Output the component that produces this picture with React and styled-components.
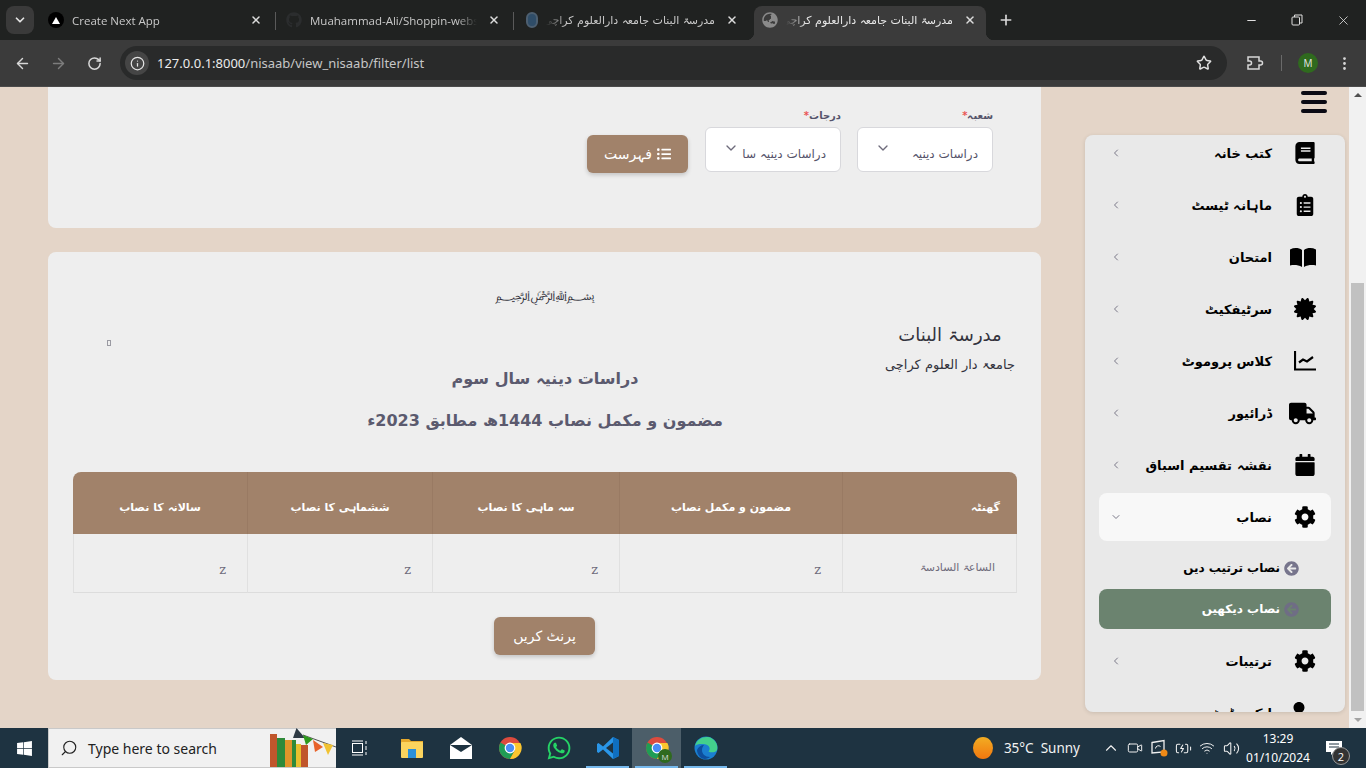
import React from 'react';
import styled, { createGlobalStyle } from 'styled-components';
import {
  ArrowLeft, ArrowRight, RotateCw, Info, Star, EllipsisVertical, X, Plus, Minus,
  ChevronDown, ChevronLeft, Search, ChevronUp, Volume2, Wifi, BatteryCharging, Video,
} from 'lucide-react';
import {
  FaBook, FaClipboardList, FaCertificate, FaTruck, FaCalendar, FaCog,
  FaUser, FaListUl, FaArrowCircleLeft, FaWindows, FaWhatsapp, FaGithub, FaGlobeAsia,
} from 'react-icons/fa';

const URDU = '"DejaVu Sans", sans-serif';
const UI = '"Open Sans", "DejaVu Sans", sans-serif';
const BROWN = '#a1826a';

const GlobalStyle = createGlobalStyle`
  html, body { margin: 0; padding: 0; height: 100%; overflow: hidden; }
  * { box-sizing: border-box; }
`;

const Screen = styled.div`
  width: 1366px;
  height: 768px;
  display: flex;
  flex-direction: column;
  font-family: ${UI};
  overflow: hidden;
`;

/* ---------- browser tabs ---------- */
const TabStrip = styled.div`
  height: 40px;
  flex: none;
  display: flex;
  align-items: flex-end;
  padding-left: 6px;
  background: #202221;
`;

const TabSearch = styled.div`
  width: 28px;
  height: 28px;
  margin: 0 4px 6px 0;
  border-radius: 8px;
  background: #3a3a3a;
  color: #e3e3e3;
  display: flex;
  align-items: center;
  justify-content: center;
`;

const Tab = styled.div`
  position: relative;
  width: ${(p) => (p.$active ? 232 : 238)}px;
  height: 34px;
  margin: ${(p) => (p.$active ? '0 2px' : '0')};
  padding: ${(p) => (p.$active ? '0 10px 6px 8px' : '0 14px 6px 10px')};
  display: flex;
  align-items: center;
  color: ${(p) => (p.$active ? '#e8e8e8' : '#c9c9c9')};
  background: ${(p) => (p.$active ? '#3b3b3b' : 'transparent')};
  border-radius: 8px 8px 0 0;
  font-size: 12px;
  ${(p) => !p.$active && !p.$last && `
    &::after {
      content: '';
      position: absolute;
      right: 0;
      top: 6px;
      width: 1px;
      height: 18px;
      background: #5a5a5a;
    }
  `}
  ${(p) => p.$active && `
    &::before, &::after {
      content: '';
      position: absolute;
      bottom: 0;
      width: 8px;
      height: 8px;
    }
    &::before {
      left: -8px;
      background: radial-gradient(circle at 0 0, transparent 8px, #3b3b3b 8.5px);
    }
    &::after {
      right: -8px;
      background: radial-gradient(circle at 100% 0, transparent 8px, #3b3b3b 8.5px);
    }
  `}
`;

const TabTitle = styled.span`
  flex: 1;
  min-width: 0;
  margin-left: 8px;
  white-space: nowrap;
  overflow: hidden;
  direction: ${(p) => (p.$rtl ? 'rtl' : 'ltr')};
  font-family: ${(p) => (p.$rtl ? URDU : UI)};
  font-size: ${(p) => (p.$rtl ? 11 : 11.5)}px;
  -webkit-mask-image: linear-gradient(${(p) => (p.$rtl ? 'to left' : 'to right')}, #000 88%, transparent);
  mask-image: linear-gradient(${(p) => (p.$rtl ? 'to left' : 'to right')}, #000 88%, transparent);
`;

const TabClose = styled(X)`
  flex: none;
  margin-left: 11px;
  color: #dcdcdc;
`;

const NextIcon = styled.span`
  width: 16px;
  height: 16px;
  flex: none;
  border-radius: 50%;
  background: #000;
  display: flex;
  align-items: center;
  justify-content: center;
  &::before {
    content: '';
    border-left: 4px solid transparent;
    border-right: 4px solid transparent;
    border-bottom: 7px solid #fff;
  }
`;

const SchoolIcon = styled.span`
  width: 12px;
  height: 16px;
  flex: none;
  margin-left: 2px;
  border-radius: 6px;
  background: #2f4d68;
  border: 2px solid #4d5f70;
`;

const NewTab = styled(Plus)`
  color: #d8d8d8;
  margin: 0 0 12px 10px;
`;

const WindowButtons = styled.div`
  margin-left: auto;
  align-self: stretch;
  display: flex;
`;

const WindowButton = styled.div`
  width: 46px;
  color: #e0e0e0;
  display: flex;
  align-items: center;
  justify-content: center;
`;

const RestoreIcon = () => (
  <svg width="12" height="12" viewBox="0 0 12 12" fill="none" stroke="currentColor">
    <rect x="1" y="3" width="7.5" height="8" rx="1" />
    <path d="M3.5 3V1h7.5v8H8.5" />
  </svg>
);

/* ---------- browser toolbar ---------- */
const Toolbar = styled.div`
  height: 46px;
  flex: none;
  position: relative;
  z-index: 1;
  display: flex;
  align-items: center;
  padding: 0 4px;
  background: #3b3b3b;
  box-shadow: 0 1px 0 #4b4b4b;
`;

const NavButton = styled.div`
  width: 36px;
  height: 36px;
  flex: none;
  display: flex;
  align-items: center;
  justify-content: center;
  color: ${(p) => (p.$dim ? '#7d7d7d' : '#d8d8d8')};
`;

const ExtensionButton = styled(NavButton)`
  margin-left: 10px;
`;

const Omnibox = styled.div`
  flex: 1;
  height: 34px;
  margin-left: 8px;
  padding: 0 15px 0 5px;
  border-radius: 17px;
  background: #292a2a;
  display: flex;
  align-items: center;
`;

const InfoBubble = styled.div`
  width: 24px;
  height: 24px;
  border-radius: 50%;
  background: #454545;
  color: #e4e4e4;
  display: flex;
  align-items: center;
  justify-content: center;
`;

const Url = styled.div`
  margin-left: 8px;
  flex: 1;
  font-family: "Noto Sans", sans-serif;
  font-size: 13px;
  color: #c6c6c6;
  span { color: #ececec; }
`;

const ToolbarSep = styled.div`
  width: 1px;
  height: 16px;
  margin: 0 8px;
  background: #6a6a6a;
`;

const Avatar = styled.div`
  width: 20px;
  height: 20px;
  border-radius: 50%;
  background: #2f6a1e;
  color: #e8e8e8;
  font-size: 10px;
  display: flex;
  align-items: center;
  justify-content: center;
`;

const ExtensionIcon = () => (
  <svg width="18" height="18" viewBox="0 0 18 18" fill="none" stroke="currentColor" strokeWidth="1.5">
    <path d="M2 3h11v4h1.500a2 2 0 0 1 0 4H13v4H2v-4h1.500a2 2 0 0 0 0-4H2z" />
  </svg>
);

/* ---------- page ---------- */
const Viewport = styled.div`
  flex: 1;
  min-height: 0;
  display: flex;
  background: #e4d5c8;
`;

const MainColumn = styled.div`
  width: 1041px;
  flex: none;
  padding-left: 48px;
  display: flex;
  flex-direction: column;
  gap: 24px;
`;

const FilterCard = styled.section`
  height: 142px;
  flex: none;
  padding: 20px 48px 0;
  background: #eeeeee;
  border-radius: 0 0 8px 8px;
  display: flex;
  direction: rtl;
  align-items: flex-start;
  gap: 16px;
`;

const Field = styled.div`
  width: 136px;
  display: flex;
  flex-direction: column;
`;

const FieldLabel = styled.label`
  height: 21px;
  font-family: ${URDU};
  font-size: 10px;
  font-weight: 700;
  color: #55536a;
  line-height: 20px;
  span { color: #ea5455; }
`;

const Select = styled.div`
  height: 45px;
  padding: 0 14px 0 17px;
  background: #fff;
  border: 1px solid #d8d8dc;
  border-radius: 6px;
  display: flex;
  align-items: center;
  justify-content: space-between;
  overflow: hidden;
  svg { flex: none; margin-bottom: 4px; }
`;

const SelectValue = styled.span`
  min-width: 0;
  margin-top: 8px;
  font-family: ${URDU};
  font-size: 12px;
  color: #55536a;
  white-space: nowrap;
`;

const BrownButton = styled.button`
  height: 38px;
  width: 101px;
  border: none;
  border-radius: 6px;
  background: ${BROWN};
  color: #fff;
  font-family: ${URDU};
  font-size: 14px;
  box-shadow: 0 2px 4px rgba(0, 0, 0, 0.18);
  display: flex;
  align-items: center;
  justify-content: center;
  gap: 5px;
  direction: rtl;
`;

const ListButton = styled(BrownButton)`
  margin: 29px 1px 0 0;
`;

const ReportCard = styled.section`
  height: 428px;
  flex: none;
  padding: 24px 24px 0 25px;
  background: #eeeeee;
  border-radius: 8px;
  display: flex;
  flex-direction: column;
  align-items: center;
`;

const Bismillah = styled.div`
  height: 40px;
  font-family: ${URDU};
  font-size: 13px;
  color: #33333d;
  direction: rtl;
  line-height: 40px;
  white-space: nowrap;
`;

const Letterhead = styled.div`
  align-self: stretch;
  height: 38px;
  margin-top: 4px;
  display: flex;
  justify-content: space-between;
  align-items: flex-start;
`;

const BrokenImage = styled.span`
  width: 4px;
  height: 6px;
  margin: 20px 0 0 34px;
  border: 1px solid #9a9aa2;
`;

const SchoolName = styled.div`
  width: 134px;
  direction: rtl;
  text-align: center;
  font-family: ${URDU};
  color: #33333d;
  white-space: nowrap;
`;

const SchoolLine = styled.div`
  height: 30px;
  line-height: 30px;
  font-size: ${(p) => p.$size}px;
`;

const Heading = styled.h2`
  margin: 0;
  direction: rtl;
  text-align: center;
  font-family: ${URDU};
  font-size: 16px;
  font-weight: 700;
  line-height: 42px;
  color: #5b5a6e;
`;

const Headings = styled.div`
  height: 114px;
`;

const Table = styled.table`
  width: 944px;
  flex: none;
  table-layout: fixed;
  border-collapse: separate;
  border-spacing: 0;
  direction: rtl;
`;

const Th = styled.th`
  height: 62px;
  padding: 8px 17px 0;
  background: ${BROWN};
  color: #fff;
  font-family: ${URDU};
  font-size: 11px;
  font-weight: 700;
  text-align: ${(p) => (p.$start ? 'right' : 'center')};
  border-left: 1px solid #997a63;
  &:first-child { border-top-right-radius: 8px; }
  &:last-child { border-top-left-radius: 8px; border-left: none; }
`;

const Td = styled.td`
  height: 59px;
  padding: ${(p) => (p.$urdu ? '8px' : '13px')} 21px 0;
  border-left: 1px solid #e0e0e0;
  border-bottom: 1px solid #dcdcdc;
  font-family: ${(p) => (p.$urdu ? URDU : '"DejaVu Serif", serif')};
  font-size: ${(p) => (p.$urdu ? 11 : 13)}px;
  color: #6e6b7b;
  text-align: right;
  &:first-child { border-right: 1px solid #e0e0e0; }
  &:last-child { border-left: 1px solid #e0e0e0; }
`;

const PrintButton = styled(BrownButton)`
  margin: 24px 1px 0 0;
`;

/* ---------- sidebar ---------- */
const SideColumn = styled.aside`
  width: 260px;
  margin-left: 44px;
  flex: none;
  display: flex;
  flex-direction: column;
  padding-top: 5px;
`;

const Hamburger = styled.div`
  align-self: flex-end;
  margin: 0 18px 22px 0;
  height: 22px;
  width: 26px;
  display: flex;
  flex-direction: column;
  justify-content: space-between;
  i {
    display: block;
    height: 4px;
    border-radius: 2px;
    background: #0a0a14;
  }
`;

const Menu = styled.nav`
  height: 577px;
  flex: none;
  overflow: hidden;
  border-radius: 8px;
  background: #e9e9e9;
  box-shadow: 0 1px 4px rgba(0, 0, 0, 0.12);
  padding: 0 14px;
`;

const MenuList = styled.div`
  margin-top: -6px;
  display: flex;
  flex-direction: column;
  gap: 4px;
  direction: rtl;
`;

const MenuItem = styled.div`
  height: 48px;
  flex: none;
  padding: 0 15px;
  display: flex;
  align-items: center;
  border-radius: 8px;
  background: ${(p) => (p.$open ? '#f8f8f8' : 'transparent')};
  margin-bottom: ${(p) => (p.$open ? '3px' : '0')};
  margin-top: ${(p) => (p.$afterSub ? '7px' : '0')};
  color: #000;
`;

const IconBox = styled.span`
  width: 28px;
  flex: none;
  display: flex;
  justify-content: flex-start;
  font-size: 22px;
`;

const MenuText = styled.span`
  margin-right: 16px;
  font-family: ${URDU};
  font-size: 13px;
  font-weight: 700;
  white-space: nowrap;
`;

const Chevron = styled.span`
  margin-right: auto;
  width: 12px;
  margin-left: -4px;
  color: #7a7888;
  display: flex;
`;

const SubItem = styled.div`
  height: 40px;
  flex: none;
  margin-bottom: -3px;
  padding-right: 32px;
  display: flex;
  align-items: center;
  gap: 4px;
  border-radius: 8px;
  background: ${(p) => (p.$active ? '#6b836f' : 'transparent')};
  color: ${(p) => (p.$active ? '#fff' : '#000')};
  font-family: ${URDU};
  font-size: 12px;
  font-weight: 700;
  svg {
    flex: none;
    font-size: 15px;
    color: ${(p) => (p.$active ? '#6f6d85' : '#77758c')};
  }
`;

const PersonIcon = styled(FaUser)`
  margin-right: 6px;
`;

const Scrollbar = styled.div`
  width: 17px;
  margin-left: 4px;
  flex: none;
  display: flex;
  flex-direction: column;
  align-items: center;
  background: #f1f1f1;
`;

const ScrollArrow = styled.div`
  height: 17px;
  flex: none;
  display: flex;
  align-items: center;
  &::before {
    content: '';
    border-left: 4px solid transparent;
    border-right: 4px solid transparent;
    ${(p) => (p.$down ? 'border-top: 4px solid #a3a3a3;' : 'border-bottom: 4px solid #505050;')}
  }
`;

const ScrollThumb = styled.div`
  width: 13px;
  height: 428px;
  margin-top: 180px;
  background: #c1c1c1;
`;

const OpenBookIcon = () => (
  <svg width="26" height="19" viewBox="0 0 26 19" fill="currentColor">
    <path d="M0 1.500C4-.5 8.500-.5 12 2v17C8.500 17 4 16.500 0 17.500z" />
    <path d="M26 1.500C22-.5 17.500-.5 14 2v17c3.500-2 8-2.500 12-1.500z" />
  </svg>
);

const ChartIcon = () => (
  <svg width="22" height="20" viewBox="0 0 22 20" fill="none" stroke="currentColor" strokeWidth="2.2">
    <path d="M1 0v18.500h21" />
    <path d="M5 11.500l4-3 4 2 6-4.500" />
  </svg>
);

/* ---------- windows taskbar ---------- */
const Taskbar = styled.div`
  height: 40px;
  flex: none;
  display: flex;
  align-items: stretch;
  background: #1e3341;
  color: #fff;
`;

const StartButton = styled.div`
  width: 48px;
  font-size: 17px;
  display: flex;
  align-items: center;
  justify-content: center;
`;

const SearchBox = styled.div`
  width: 288px;
  padding-left: 11px;
  background: #f1f1f1;
  border: 1px solid #c9c9c9;
  border-right: none;
  color: #222;
  font-size: 14px;
  display: flex;
  align-items: center;
  span { margin-left: 10px; font-family: "Noto Sans", sans-serif; }
`;

const SearchGlass = styled(Search)`
  flex: none;
  transform: scaleX(-1);
`;

const BooksArt = ({ className }) => (
  <svg className={className} width="66" height="40" viewBox="0 0 66 40">
    <rect x="0" y="7" width="7" height="33" fill="#c0562c" />
    <rect x="7" y="11" width="8" height="29" fill="#2f8a3a" />
    <rect x="15" y="13" width="7" height="27" fill="#e0952a" />
    <rect x="22" y="13" width="4" height="27" fill="#2f8a3a" />
    <rect x="26" y="17" width="5" height="23" fill="#e8c02e" />
    <rect x="31" y="18" width="7" height="22" fill="#c0562c" />
    <path d="M33 8L66 20" stroke="#555" fill="none" />
    <path d="M26.500 1L35 11H23z" fill="#2e3a44" />
    <path d="M33 8l10 4-7 6z" fill="#2e9a1c" />
    <path d="M43 13l10 7-8 5z" fill="#e8632a" />
    <path d="M53 16l10 2-5 10z" fill="#f1c232" />
  </svg>
);

const SearchArt = styled(BooksArt)`
  flex: none;
  margin-left: auto;
  margin-top: -2px;
`;

const TaskView = styled.div`
  width: 48px;
  margin-right: 3px;
  display: flex;
  align-items: center;
  justify-content: center;
`;

const AppButton = styled.div`
  width: 49px;
  flex: none;
  position: relative;
  display: flex;
  align-items: center;
  justify-content: center;
  background: ${(p) => (p.$active ? '#4c5e69' : 'transparent')};
  ${(p) => p.$running && `
    &::after {
      content: '';
      position: absolute;
      left: 3px;
      right: 3px;
      bottom: 0;
      height: 2px;
      background: #76b9ed;
    }
  `}
`;

const AvatarBadge = styled.span`
  position: absolute;
  left: 26px;
  top: 21px;
  width: 14px;
  height: 14px;
  border-radius: 50%;
  background: #2f6a1e;
  color: #ddd;
  font-size: 8px;
  display: flex;
  align-items: center;
  justify-content: center;
`;

const Weather = styled.div`
  margin-left: auto;
  margin-right: 19px;
  display: flex;
  align-items: center;
  font-size: 13.500px;
  font-family: "Noto Sans", sans-serif;
  white-space: pre;
  color: #f2f2f2;
`;

const Sun = styled.span`
  width: 20px;
  height: 22px;
  margin-right: 11px;
  border-radius: 50%;
  background: linear-gradient(#f2ad23, #f2770f);
`;

const TrayIcon = styled.div`
  width: 24px;
  flex: none;
  display: flex;
  align-items: center;
  justify-content: center;
  color: #f0f0f0;
`;

const Clock = styled.div`
  width: 70px;
  flex: none;
  display: flex;
  flex-direction: column;
  align-items: center;
  justify-content: center;
  gap: 4px;
  font-size: 12px;
  font-family: "Noto Sans", sans-serif;
  line-height: 15px;
`;

const Notification = styled.div`
  width: 45px;
  margin-right: 8px;
  padding-right: 4px;
  flex: none;
  position: relative;
  display: flex;
  align-items: center;
  justify-content: center;
`;

const CountBadge = styled.span`
  position: absolute;
  left: 19px;
  top: 19px;
  width: 18px;
  height: 18px;
  border-radius: 50%;
  border: 1px solid #999;
  background: #333;
  font-size: 11px;
  display: flex;
  align-items: center;
  justify-content: center;
`;

const ChromeLogo = () => (
  <svg width="24" height="24" viewBox="0 0 24 24">
    <circle cx="12" cy="12" r="11" fill="#dd4b3e" />
    <path d="M12 12 2.500 6.500A11 11 0 0 0 12 23l5.500-9.500z" fill="#1f9d55" />
    <path d="M12 7h10.400A11 11 0 0 1 12 23l5-9z" fill="#fbc62f" />
    <circle cx="12" cy="12" r="5.400" fill="#fff" />
    <circle cx="12" cy="12" r="4.200" fill="#4a8df6" />
  </svg>
);

const FolderLogo = () => (
  <svg width="24" height="22" viewBox="0 0 24 22">
    <path d="M1 2h8l2 2h12v4H1z" fill="#e6a92c" />
    <rect x="1" y="5" width="22" height="16" rx="1" fill="#fbd45e" />
    <rect x="8" y="12" width="8" height="9" fill="#2a8fd8" />
  </svg>
);

const MailLogo = () => (
  <svg width="24" height="24" viewBox="0 0 24 24">
    <path d="M1 9 12 1l11 8v14H1z" fill="#fff" />
    <path d="M1 9l22 0-11 7z" fill="#1e3341" />
  </svg>
);

const CodeLogo = () => (
  <svg width="24" height="24" viewBox="0 0 24 24">
    <path d="M17 1 23 4v16l-6 3L7 13.500 2.500 17 1 16v-8l1.500-1L7 10.500z" fill="#2a96e8" />
    <path d="M17 6.500v11L10 12z" fill="#1e3341" />
    <path d="M17 1 23 4v16l-6 3z" fill="#0f6fc0" />
  </svg>
);

const EdgeLogo = () => (
  <svg width="24" height="24" viewBox="0 0 24 24">
    <circle cx="12" cy="12" r="11.500" fill="#1b7fd0" />
    <path d="M1 10C3 2 12-1 18 2.500 23 5.500 24 11 23 14c-1 2.500-6 3-8.500 1.500 2-2 1.500-6-2.500-7C7 7.500 3 8 1 10z" fill="#43d08c" />
    <path d="M8 14c0 4 3 7 8 7-2 2-7 3-10 0-2-2-3-5-3-7 1-3 4-5 7-5-1 1-2 3-2 5z" fill="#0d4f9e" />
  </svg>
);

const SyncTrayIcon = () => (
  <svg width="18" height="18" viewBox="0 0 18 18" fill="none">
    <path d="M2 3.500l12-2V13l-12 1z" stroke="#f0f0f0" strokeWidth="1.300" />
    <path d="M5.500 9.500a3 3 0 0 1 5-2" stroke="#f0f0f0" />
    <circle cx="14" cy="14" r="3.500" fill="#f08a16" />
  </svg>
);

const MENU = [
  { text: 'کتب خانہ', icon: <FaBook /> },
  { text: 'ماہانہ ٹیسٹ', icon: <FaClipboardList /> },
  { text: 'امتحان', icon: <OpenBookIcon /> },
  { text: 'سرٹیفکیٹ', icon: <FaCertificate /> },
  { text: 'کلاس پروموٹ', icon: <ChartIcon /> },
  { text: 'ڈرائیور', icon: <FaTruck size={27} /> },
  { text: 'نقشہ تقسیم اسباق', icon: <FaCalendar /> },
];

const COLUMNS = [
  { title: 'گھنٹہ', width: 175, start: true },
  { title: 'مضمون و مکمل نصاب', width: 223 },
  { title: 'سہ ماہی کا نصاب', width: 187 },
  { title: 'ششماہی کا نصاب', width: 185 },
  { title: 'سالانہ کا نصاب', width: 174 },
];

function SideItem({ text, icon, open, afterSub, noArrow }) {
  return (
    <MenuItem $open={open} $afterSub={afterSub}>
      <IconBox>{icon}</IconBox>
      <MenuText>{text}</MenuText>
      {!noArrow && (
        <Chevron>{open ? <ChevronDown size={14} /> : <ChevronLeft size={12} />}</Chevron>
      )}
    </MenuItem>
  );
}

function BrowserChrome() {
  return (
    <>
      <TabStrip>
        <TabSearch><ChevronDown size={14} strokeWidth={3} /></TabSearch>
        <Tab><NextIcon /><TabTitle>Create Next App</TabTitle><TabClose size={12} strokeWidth={3} /></Tab>
        <Tab><FaGithub size={16} color="#2b2d2e" /><TabTitle>Muahammad-Ali/Shoppin-website</TabTitle><TabClose size={12} strokeWidth={3} /></Tab>
        <Tab $last><SchoolIcon /><TabTitle $rtl>مدرسۃ البنات جامعہ دارالعلوم کراچی</TabTitle><TabClose size={12} strokeWidth={3} /></Tab>
        <Tab $active><FaGlobeAsia size={16} color="#8a8a8a" /><TabTitle $rtl>مدرسۃ البنات جامعہ دارالعلوم کراچی</TabTitle><TabClose size={12} strokeWidth={3} /></Tab>
        <NewTab size={16} strokeWidth={2.5} />
        <WindowButtons>
          <WindowButton><Minus size={13} /></WindowButton>
          <WindowButton><RestoreIcon /></WindowButton>
          <WindowButton><X size={15} strokeWidth={1.3} /></WindowButton>
        </WindowButtons>
      </TabStrip>
      <Toolbar>
        <NavButton><ArrowLeft size={17} /></NavButton>
        <NavButton $dim><ArrowRight size={17} /></NavButton>
        <NavButton><RotateCw size={15} strokeWidth={2.4} /></NavButton>
        <Omnibox>
          <InfoBubble><Info size={15} /></InfoBubble>
          <Url><span>127.0.0.1:8000</span>/nisaab/view_nisaab/filter/list</Url>
          <Star size={16} color="#e0e0e0" strokeWidth={2.2} />
        </Omnibox>
        <ExtensionButton><ExtensionIcon /></ExtensionButton>
        <ToolbarSep />
        <NavButton><Avatar>M</Avatar></NavButton>
        <NavButton><EllipsisVertical size={17} /></NavButton>
      </Toolbar>
    </>
  );
}

function WindowsTaskbar() {
  return (
    <Taskbar>
      <StartButton><FaWindows /></StartButton>
      <SearchBox>
        <SearchGlass size={18} strokeWidth={1.5} />
        <span>Type here to search</span>
        <SearchArt />
      </SearchBox>
      <TaskView>
        <svg width="16" height="16" viewBox="0 0 16 16" fill="none" stroke="#fff">
          <rect x="0.500" y="3.500" width="10" height="9" />
          <path d="M0 1h11M0 15h11M14 1v3M14 6v4M14 12v3" />
        </svg>
      </TaskView>
      <AppButton><FolderLogo /></AppButton>
      <AppButton><MailLogo /></AppButton>
      <AppButton><ChromeLogo /></AppButton>
      <AppButton><FaWhatsapp size={26} color="#25d366" /></AppButton>
      <AppButton $running><CodeLogo /></AppButton>
      <AppButton $active $running><ChromeLogo /><AvatarBadge>M</AvatarBadge></AppButton>
      <AppButton $running><EdgeLogo /></AppButton>
      <Weather><Sun />{'35°C  Sunny'}</Weather>
      <TrayIcon><ChevronUp size={18} strokeWidth={1.5} /></TrayIcon>
      <TrayIcon><Video size={16} strokeWidth={1.5} /></TrayIcon>
      <TrayIcon><SyncTrayIcon /></TrayIcon>
      <TrayIcon><BatteryCharging size={17} strokeWidth={1.5} /></TrayIcon>
      <TrayIcon><Wifi size={16} strokeWidth={1.5} /></TrayIcon>
      <TrayIcon><Volume2 size={17} strokeWidth={1.5} /></TrayIcon>
      <Clock><span>13:29</span><span>01/10/2024</span></Clock>
      <Notification>
        <svg width="16" height="16" viewBox="0 0 16 16" fill="#fff">
          <path d="M0 1h16v11H8l-3 3v-3H0z" />
          <path d="M3 4h10M3 7h10" stroke="#1e3341" />
        </svg>
        <CountBadge>2</CountBadge>
      </Notification>
    </Taskbar>
  );
}

export default function App() {
  return (
    <Screen>
      <GlobalStyle />
      <BrowserChrome />
      <Viewport>
        <MainColumn>
          <FilterCard>
            <Field>
              <FieldLabel>شعبہ<span>*</span></FieldLabel>
              <Select><SelectValue>دراسات دینیہ</SelectValue><ChevronDown size={16} color="#6e6b7b" /></Select>
            </Field>
            <Field>
              <FieldLabel>درجات<span>*</span></FieldLabel>
              <Select><SelectValue>دراسات دینیہ سا</SelectValue><ChevronDown size={16} color="#6e6b7b" /></Select>
            </Field>
            <ListButton><FaListUl size={14} />فہرست</ListButton>
          </FilterCard>
          <ReportCard>
            <Bismillah>﷽</Bismillah>
            <Letterhead>
              <BrokenImage />
              <SchoolName>
                <SchoolLine $size={18}>مدرسۃ البنات</SchoolLine>
                <SchoolLine $size={13}>جامعۃ دار العلوم کراچی</SchoolLine>
              </SchoolName>
            </Letterhead>
            <Headings>
              <Heading>دراسات دینیہ سال سوم</Heading>
              <Heading>مضمون و مکمل نصاب 1444ھ مطابق 2023ء</Heading>
            </Headings>
            <Table>
              <colgroup>
                {COLUMNS.map((c) => <col key={c.title} width={c.width} />)}
              </colgroup>
              <thead>
                <tr>
                  {COLUMNS.map((c) => <Th key={c.title} $start={c.start}>{c.title}</Th>)}
                </tr>
              </thead>
              <tbody>
                <tr>
                  <Td $urdu>الساعۃ السادسۃ</Td>
                  <Td>z</Td>
                  <Td>z</Td>
                  <Td>z</Td>
                  <Td>z</Td>
                </tr>
              </tbody>
            </Table>
            <PrintButton>پرنٹ کریں</PrintButton>
          </ReportCard>
        </MainColumn>
        <SideColumn>
          <Hamburger><i /><i /><i /></Hamburger>
          <Menu>
            <MenuList>
              {MENU.map((m) => <SideItem key={m.text} text={m.text} icon={m.icon} />)}
              <SideItem text="نصاب" icon={<FaCog />} open />
              <SubItem><FaArrowCircleLeft />نصاب ترتیب دیں</SubItem>
              <SubItem $active><FaArrowCircleLeft />نصاب دیکھیں</SubItem>
              <SideItem text="ترتیبات" icon={<FaCog />} afterSub />
              <SideItem text="ایکسیڈنٹ" icon={<PersonIcon />} noArrow />
            </MenuList>
          </Menu>
        </SideColumn>
        <Scrollbar>
          <ScrollArrow />
          <ScrollThumb />
          <ScrollArrow $down />
        </Scrollbar>
      </Viewport>
      <WindowsTaskbar />
    </Screen>
  );
}
